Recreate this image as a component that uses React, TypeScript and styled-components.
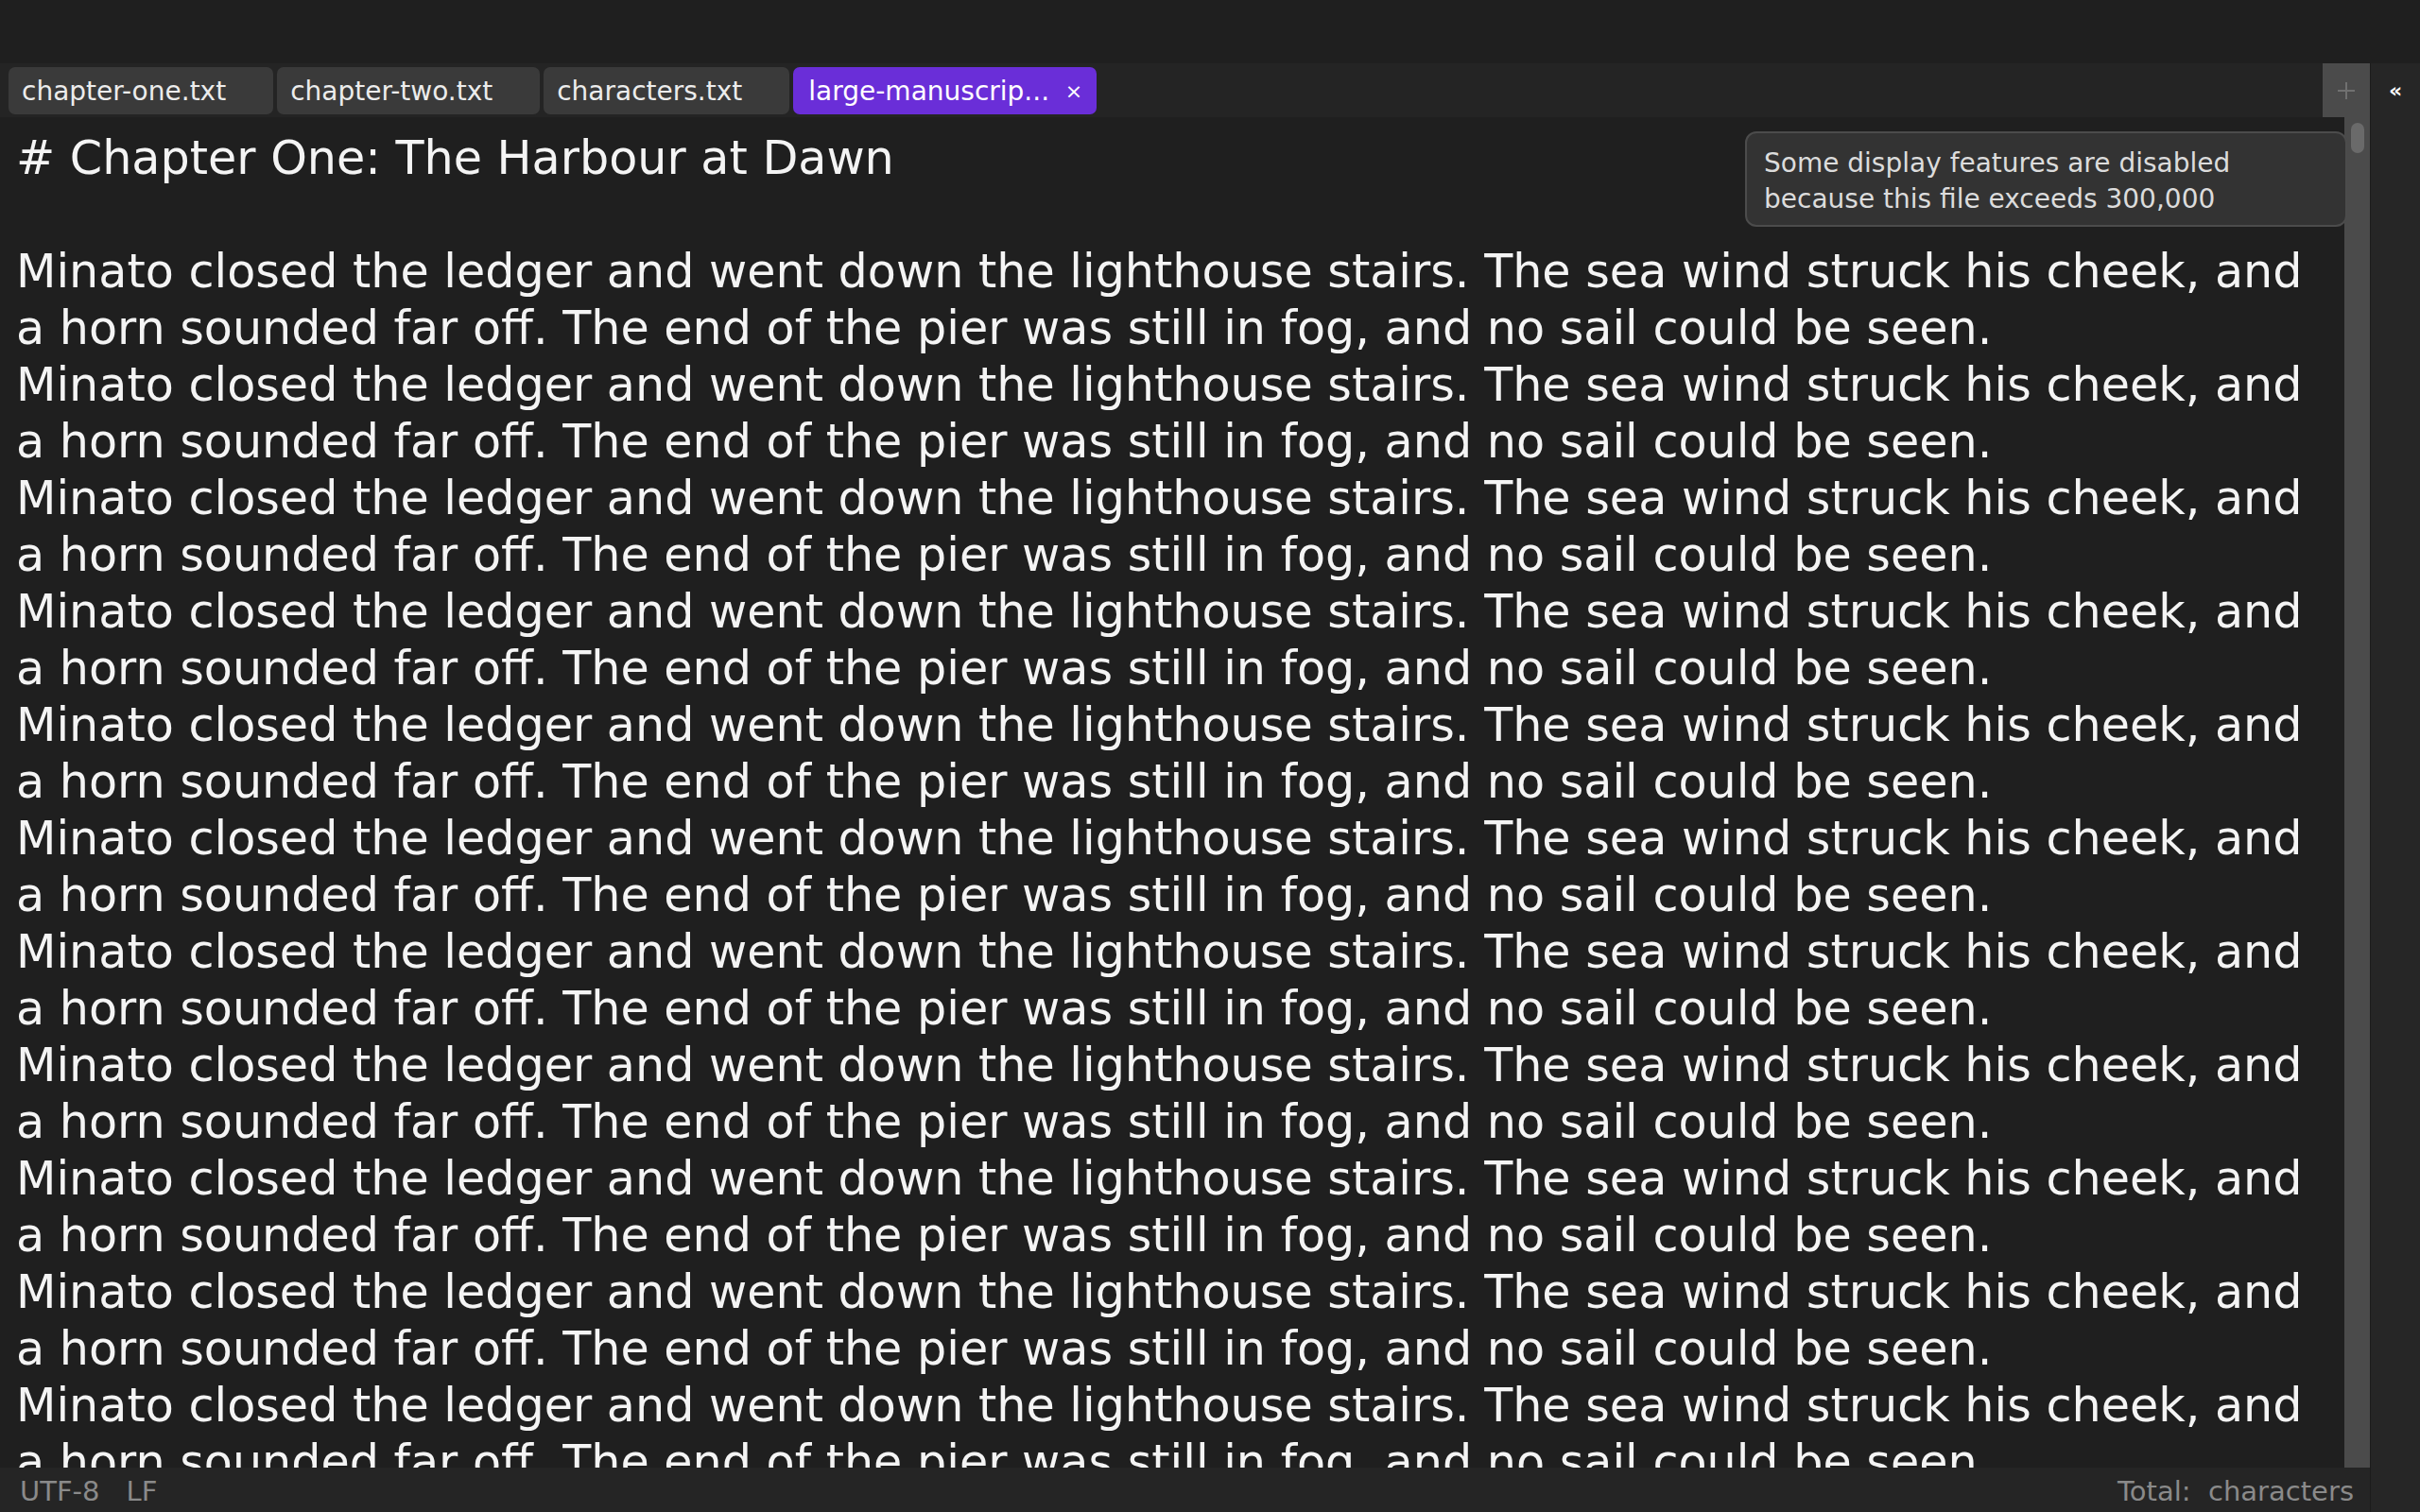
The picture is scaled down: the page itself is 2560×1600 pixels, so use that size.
import React from 'react';
import styled, { createGlobalStyle } from 'styled-components';

// ---------- global ----------
const GlobalStyle = createGlobalStyle`
  html, body {
    margin: 0;
    padding: 0;
    background: #1f1f1f;
    overflow: hidden;
  }
  body {
    font-family: "DejaVu Sans", "Noto Sans", sans-serif;
    color: #f4f4f4;
  }
  * { box-sizing: border-box; }
`;

// ---------- frame ----------
const Window = styled.div`
  width: 100vw;
  height: 100vh;
  display: flex;
  flex-direction: column;
  background: #1f1f1f;
`;

const TitleBar = styled.div`
  height: 67px;
  flex: 0 0 67px;
  background: #1f1f1f;
`;

const Workspace = styled.div`
  flex: 1;
  min-height: 0;
  display: flex;
`;

const EditorPane = styled.div`
  flex: 1;
  min-width: 0;
  display: flex;
  flex-direction: column;
`;

// ---------- tabs ----------
const TabBar = styled.div`
  height: 57px;
  flex: 0 0 57px;
  display: flex;
  background: #242424;
`;

const TabList = styled.div`
  flex: 1;
  display: flex;
  gap: 4px;
  padding: 4px 0 3px 9px;
`;

const Tab = styled.div<{ $active?: boolean }>`
  display: flex;
  align-items: center;
  height: 50px;
  padding: 0 14px 0 ${(p) => (p.$active ? 16 : 14)}px;
  border-radius: 7px;
  background: ${(p) => (p.$active ? '#6a2ed8' : '#3a3a3a')};
  color: ${(p) => (p.$active ? '#ffffff' : '#ececec')};
  font-size: 28px;
  white-space: nowrap;
  cursor: default;
`;

const TabClose = styled.span<{ $visible?: boolean }>`
  visibility: ${(p) => (p.$visible ? 'visible' : 'hidden')};
  width: 20px;
  margin-left: 16px;
  text-align: center;
  font-size: 22px;
  color: #ffffff;
`;

const NewTabButton = styled.div`
  width: 50px;
  flex: 0 0 50px;
  display: flex;
  align-items: center;
  justify-content: center;
  background: #4b4b4b;
`;

// ---------- editor ----------
const EditorBody = styled.div`
  position: relative;
  flex: 1;
  min-height: 0;
  display: flex;
`;

const TextView = styled.div`
  flex: 1;
  min-width: 0;
  overflow: hidden;
  padding: 13px 17px 0;
  font-size: 49.2px;
  line-height: 60px;
  color: #f4f4f4;
`;

const Line = styled.div`
  height: 60px;
  white-space: pre;
`;

const Scrollbar = styled.div`
  width: 27px;
  flex: 0 0 27px;
  background: #4b4b4b;
  padding: 6px 6px 0 7px;
`;

const ScrollThumb = styled.div`
  height: 32px;
  border-radius: 7px;
  background: #6a6a6a;
`;

const Notice = styled.div`
  position: absolute;
  top: 15px;
  right: 24px;
  width: 637px;
  height: 101px;
  overflow: hidden;
  padding: 13px 18px;
  background: #333333;
  border: 2px solid #4c4c4c;
  border-radius: 12px;
  color: #dcdcdc;
  font-size: 28px;
  line-height: 38px;
`;

// ---------- status ----------
const StatusBar = styled.div`
  height: 47px;
  flex: 0 0 47px;
  display: flex;
  align-items: center;
  justify-content: space-between;
  padding: 2px 17px 0 21px;
  background: #252525;
  color: #8a8a8a;
  font-size: 29px;
`;

const StatusGroup = styled.div`
  display: flex;
  gap: 28px;
`;

const StatusText = styled.span`
  white-space: pre;
`;

// ---------- sidebar ----------
const Sidebar = styled.div`
  width: 53px;
  flex: 0 0 53px;
  background: #262626;
  border-left: 1px solid #1c1c1c;
  display: flex;
  justify-content: center;
  padding-top: 14px;
`;

const CollapseButton = styled.div`
  height: 30px;
  line-height: 30px;
  font-size: 22px;
  font-weight: bold;
  color: #ffffff;
`;

// ---------- data ----------
const tabs = [
  { name: 'chapter-one.txt' },
  { name: 'chapter-two.txt' },
  { name: 'characters.txt' },
  { name: 'large-manuscrip...', active: true },
];

const lineA =
  'Minato closed the ledger and went down the lighthouse stairs. The sea wind struck his cheek, and';
const lineB =
  'a horn sounded far off. The end of the pier was still in fog, and no sail could be seen.';

const lines: string[] = ['# Chapter One: The Harbour at Dawn', ' '];
for (let i = 0; i < 12; i++) lines.push(lineA, lineB);

export default function App() {
  return (
    <>
      <GlobalStyle />
      <Window>
        <TitleBar />
        <Workspace>
          <EditorPane>
            <TabBar>
              <TabList>
                {tabs.map((t) => (
                  <Tab key={t.name} $active={t.active}>
                    {t.name}
                    <TabClose $visible={t.active}>×</TabClose>
                  </Tab>
                ))}
              </TabList>
              <NewTabButton>
                <svg width="22" height="22" viewBox="0 0 22 22">
                  <path d="M11 2v18M2 11h18" stroke="#707070" strokeWidth="2" />
                </svg>
              </NewTabButton>
            </TabBar>

            <EditorBody>
              <TextView>
                {lines.map((l, i) => (
                  <Line key={i}>{l}</Line>
                ))}
              </TextView>
              <Scrollbar>
                <ScrollThumb />
              </Scrollbar>
              <Notice>
                Some display features are disabled
                <br />
                because this file exceeds 300,000
              </Notice>
            </EditorBody>

            <StatusBar>
              <StatusGroup>
                <StatusText>UTF-8</StatusText>
                <StatusText>LF</StatusText>
              </StatusGroup>
              <StatusText>Total:  characters</StatusText>
            </StatusBar>
          </EditorPane>
          <Sidebar>
            <CollapseButton>«</CollapseButton>
          </Sidebar>
        </Workspace>
      </Window>
    </>
  );
}
